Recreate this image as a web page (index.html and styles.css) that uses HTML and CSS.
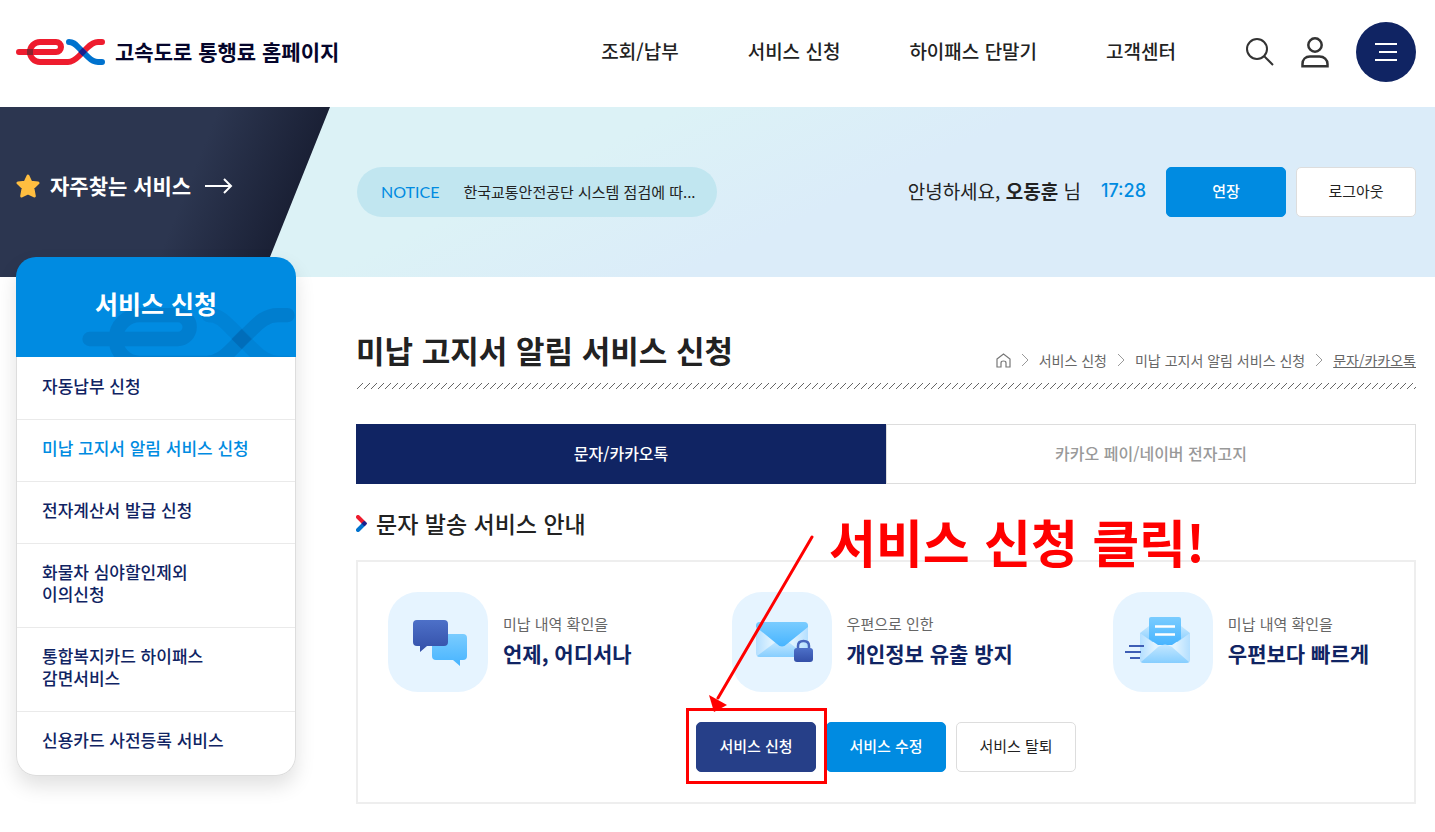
FILE: index.html
```html
<!DOCTYPE html>
<html lang="ko">
<head>
    <meta charset="UTF-8">
    <meta name="viewport" content="width=device-width, initial-scale=1">
    <title>고속도로 통행료 홈페이지</title>
    <link rel="stylesheet" href="styles.css">
</head>
<body>

<header class="header">
    <a href="#" class="logo">
        <svg width="89" height="26" viewBox="0 0 89 26" fill="none" stroke-width="6" stroke-linecap="round">
            <path stroke="#ee1c2e" d="M3 13H40A5 5 0 0 0 40 3H24A10 10 0 0 0 24 23H52C57 23 60 20 63 17L71 9C74 6 77 3 82 3H86"/>
            <path stroke="#0072ce" d="M53 3C57 3 59 5 62 8L72 18C75 21 78 23 82 23H86"/>
            <path fill="#8a2430" d="M11 10H17V16H11Z"/>
            <path fill="#1b1f8a" d="M66.700 8.800L70.900 13L66.700 17.200L62.500 13Z"/>
        </svg>
        <span>고속도로 통행료 홈페이지</span>
    </a>
    <nav class="gnb">
        <a href="#">조회/납부</a>
        <a href="#">서비스 신청</a>
        <a href="#">하이패스 단말기</a>
        <a href="#">고객센터</a>
    </nav>
    <div class="util">
        <button type="button" aria-label="검색">
            <svg width="28" height="28" viewBox="0 0 28 28" fill="none" stroke="#333" stroke-width="2">
                <circle cx="11" cy="11" r="10"/>
                <path d="M18 18L27 27"/>
            </svg>
        </button>
        <button type="button" aria-label="마이페이지">
            <svg width="28" height="31" viewBox="0 0 28 31" fill="none" stroke="#333" stroke-width="2.500">
                <circle cx="14" cy="8" r="6.700"/>
                <path d="M1.500 29.200V27C1.500 22.500 4.500 19.500 9 19.500H18.500C23 19.500 26.500 22.500 26.500 27V29.200Z"/>
            </svg>
        </button>
        <button type="button" class="menu" aria-label="전체메뉴">
            <svg width="22" height="18" viewBox="0 0 22 18" stroke="#fff" stroke-width="2">
                <path d="M0 1H22M4 9H22M0 17H22"/>
            </svg>
        </button>
    </div>
</header>

<section class="hero">
    <a href="#" class="quick">
        <svg width="24" height="24" viewBox="0 0 24 24" fill="#ffbe40" stroke="#ffbe40" stroke-width="3" stroke-linejoin="round">
            <path d="M12 2L14.800 8.200L22 9L16.800 13.800L18.300 22L12 18.800L5.700 22L7.200 13.800L2 9L9.200 8.200Z"/>
        </svg>
        <span>자주찾는 서비스</span>
        <svg width="28" height="16" viewBox="0 0 28 16" fill="none" stroke="#fff" stroke-width="2">
            <path d="M0 8H26M19 1L26 8L19 15"/>
        </svg>
    </a>
    <div class="hero-bar">
        <a href="#" class="notice"><span class="notice-label">NOTICE</span><span>한국교통안전공단 시스템 점검에 따...</span></a>
        <div class="session">
            <span>안녕하세요, <b>오동훈</b> 님</span>
            <span class="timer">17:28</span>
            <button type="button" class="btn btn-blue">연장</button>
            <button type="button" class="btn">로그아웃</button>
        </div>
    </div>
</section>

<div class="container">
    <aside class="side">
        <div class="side-title">
            <svg class="side-mark" width="213" height="62" viewBox="0 0 89 26" fill="none" stroke-width="6" stroke-linecap="round">
                <path stroke="#00569b" stroke-opacity=".25" d="M3 13H40A5 5 0 0 0 40 3H24A10 10 0 0 0 24 23H52C57 23 60 20 63 17L71 9C74 6 77 3 82 3H86"/>
                <path stroke="#00569b" stroke-opacity=".15" d="M53 3C57 3 59 5 62 8L72 18C75 21 78 23 82 23H86"/>
                <path fill="#00569b" fill-opacity=".3" d="M66.700 8.800L70.900 13L66.700 17.200L62.500 13Z"/>
            </svg>
            <h2>서비스 신청</h2>
        </div>
        <ul class="lnb">
            <li><a href="#">자동납부 신청</a></li>
            <li><a href="#" class="on">미납 고지서 알림 서비스 신청</a></li>
            <li><a href="#">전자계산서 발급 신청</a></li>
            <li><a href="#">화물차 심야할인제외<br>이의신청</a></li>
            <li><a href="#">통합복지카드 하이패스<br>감면서비스</a></li>
            <li><a href="#">신용카드 사전등록 서비스</a></li>
        </ul>
    </aside>

    <main class="content">
        <div class="title-row">
            <h1>미납 고지서 알림 서비스 신청</h1>
            <nav class="path">
                <a href="#" aria-label="홈">
                    <svg width="15" height="15" viewBox="0 0 15 15" fill="none" stroke="#777" stroke-width="1.200">
                        <path d="M1 6L7.500 1L14 6V14H10V10Q10 8 7.500 8Q5 8 5 10V14H1Z"/>
                    </svg>
                </a>
                <svg class="sep" width="8" height="14" viewBox="0 0 8 14" fill="none" stroke="#999"><path d="M1 1L7 7L1 13"/></svg>
                <a href="#">서비스 신청</a>
                <svg class="sep" width="8" height="14" viewBox="0 0 8 14" fill="none" stroke="#999"><path d="M1 1L7 7L1 13"/></svg>
                <a href="#">미납 고지서 알림 서비스 신청</a>
                <svg class="sep" width="8" height="14" viewBox="0 0 8 14" fill="none" stroke="#999"><path d="M1 1L7 7L1 13"/></svg>
                <a href="#" class="current">문자/카카오톡</a>
            </nav>
        </div>
        <svg class="hatch" width="100%" height="6">
            <defs>
                <pattern id="hatch" width="7" height="6" patternUnits="userSpaceOnUse">
                    <path d="M1 6L7 0" stroke="#666" fill="none"/>
                </pattern>
            </defs>
            <rect width="100%" height="6" fill="url(#hatch)"/>
        </svg>

        <div class="tabs">
            <button type="button" class="tab on">문자/카카오톡</button>
            <button type="button" class="tab">카카오 페이/네이버 전자고지</button>
        </div>

        <h2 class="sub-title">
            <svg width="11" height="17" viewBox="0 0 11 17" fill="none" stroke-width="4" stroke-linecap="round">
                <path stroke="#ee1c2e" d="M2 2L8.500 8.500"/>
                <path stroke="#0072ce" d="M2 15L8.500 8.500"/>
                <path fill="#1b1f8a" d="M8.300 5.700L11 8.500L8.300 11.300L5.500 8.500Z"/>
            </svg>
            문자 발송 서비스 안내
        </h2>

        <section class="card">
            <ul class="benefits">
                <li>
                    <span class="icon">
                        <svg width="100" height="100" viewBox="0 0 100 100">
                            <defs>
                                <linearGradient id="navy" x2="0" y2="1"><stop stop-color="#4d70c8"/><stop offset="1" stop-color="#334fa8"/></linearGradient>
                                <linearGradient id="sky" x2="0" y2="1"><stop stop-color="#7accff"/><stop offset="1" stop-color="#47b4ff"/></linearGradient>
                                <linearGradient id="pale" x2="0" y2="1"><stop stop-color="#c4e7ff"/><stop offset="1" stop-color="#86ceff"/></linearGradient>
                                <linearGradient id="flap"><stop stop-color="#b4dfff"/><stop offset=".3" stop-color="#e0f3ff"/><stop offset=".7" stop-color="#e0f3ff"/><stop offset="1" stop-color="#b4dfff"/></linearGradient>
                            </defs>
                            <path fill="url(#sky)" d="M48 42H75Q79 42 79 46V64Q79 68 75 68H72V74L65 68H48Q44 68 44 64V46Q44 42 48 42Z"/>
                            <path fill="url(#navy)" d="M29 28H56Q60 28 60 32V50Q60 54 56 54H39L32 60V54H29Q25 54 25 50V32Q25 28 29 28Z"/>
                        </svg>
                    </span>
                    <p><span>미납 내역 확인을</span><strong>언제, 어디서나</strong></p>
                </li>
                <li>
                    <span class="icon">
                        <svg width="100" height="100" viewBox="0 0 100 100">
                            <rect x="24" y="30" width="52" height="35" rx="4" fill="url(#flap)"/>
                            <path fill="url(#pale)" d="M25 64L45 49H55L75 64Q74 65 72 65H28Q26 65 25 64Z"/>
                            <path fill="url(#sky)" d="M28 30H72Q76 30 76 34V35L55 52Q50 57 45 52L24 35V34Q24 30 28 30Z"/>
                            <path fill="none" stroke="#4867be" stroke-width="2.500" d="M66 57V54Q66 49 71.500 49Q77 49 77 54V57"/>
                            <rect x="62" y="56" width="19" height="14" rx="3" fill="url(#navy)"/>
                        </svg>
                    </span>
                    <p><span>우편으로 인한</span><strong>개인정보 유출 방지</strong></p>
                </li>
                <li>
                    <span class="icon">
                        <svg width="100" height="100" viewBox="0 0 100 100">
                            <path fill="url(#pale)" d="M27 41L36 34H68L77 41V50H27Z"/>
                            <path fill="url(#flap)" d="M27 41L45 54H59L77 41V68Q77 71 74 71H30Q27 71 27 68Z"/>
                            <path fill="url(#sky)" d="M38 25H66Q68 25 68 27V47L59 53H45L36 47V27Q36 25 38 25Z"/>
                            <path stroke="#fff" stroke-width="2.500" d="M42 34.500H62M42 42.500H62"/>
                            <path fill="url(#pale)" d="M28 70L45 55Q52 50 59 55L76 70Q75 71 73 71H31Q29 71 28 70Z"/>
                            <path stroke="#3f5eb5" stroke-width="2" d="M16 54H31M12 60H28M17 66H27"/>
                        </svg>
                    </span>
                    <p><span>미납 내역 확인을</span><strong>우편보다 빠르게</strong></p>
                </li>
            </ul>
            <div class="actions">
                <div class="guide">
                    <button type="button" class="btn btn-navy">서비스 신청</button>
                    <span class="guide-box"></span>
                    <svg class="guide-arrow" width="130" height="180" viewBox="0 0 130 180">
                        <path d="M116 5L22 166" stroke="#f00" stroke-width="3" stroke-linecap="round"/>
                        <path d="M13 163L31 173L18 180Z" fill="#f00"/>
                    </svg>
                    <strong class="guide-text">서비스 신청 클릭!</strong>
                </div>
                <button type="button" class="btn btn-blue">서비스 수정</button>
                <button type="button" class="btn">서비스 탈퇴</button>
            </div>
        </section>
    </main>
</div>

</body>
</html>
```
FILE: styles.css
```css
* {
    box-sizing: border-box;
}
body {
    margin: 0;
    font-family: "Noto Sans CJK KR", sans-serif;
    font-size: 15px;
    line-height: 22px;
    color: #222;
    background: #fff;
}
h1, h2, p, ul {
    margin: 0;
    padding: 0;
}
ul {
    list-style: none;
}
a {
    color: inherit;
    text-decoration: none;
}
button {
    font-family: inherit;
    cursor: pointer;
}
svg {
    display: block;
    flex-shrink: 0;
}

/* header */
.header {
    display: flex;
    align-items: center;
    padding: 22px 19px 25px 16px;
}
.logo {
    display: flex;
    align-items: center;
    gap: 10px;
    font-size: 21px;
    font-weight: 700;
    color: #05052b;
}
.logo span, .gnb {
    padding-bottom: 3px;
}
.gnb {
    display: flex;
    gap: 69px;
    margin-left: auto;
    font-size: 19px;
    font-weight: 500;
}
.util {
    display: flex;
    align-items: center;
    gap: 27px;
    margin-left: 70px;
}
.util button {
    padding: 0;
    border: 0;
    background: none;
}
.util .menu {
    display: flex;
    align-items: center;
    justify-content: center;
    width: 60px;
    height: 60px;
    border-radius: 50%;
    background: #102463;
}

/* top band */
.hero {
    display: flex;
    min-height: 170px;
    background: linear-gradient(155deg, #dcf2f6 38%, #dbecf9 58%);
}
.quick {
    display: flex;
    align-items: center;
    gap: 10px;
    flex: 0 0 330px;
    padding: 0 0 12px 16px;
    font-size: 21px;
    font-weight: 700;
    color: #fff;
    background: linear-gradient(112deg, #2c3650 55%, #1a2035 83%);
    clip-path: polygon(0 0, 100% 0, 262px 100%, 0 100%);
}
.quick span {
    margin-right: 4px;
    padding-bottom: 2px;
}
.hero-bar {
    display: flex;
    flex: 1;
    align-items: center;
    justify-content: space-between;
    padding: 0 19px 0 27px;
}
.notice {
    display: flex;
    align-items: center;
    gap: 24px;
    width: 360px;
    height: 50px;
    padding: 0 24px;
    border-radius: 25px;
    background: #c1e6f0;
    white-space: nowrap;
}
.notice-label {
    font-family: Lato, sans-serif;
    font-size: 16px;
    color: #008be1;
}
.session {
    display: flex;
    align-items: center;
    gap: 10px;
    font-size: 19px;
}
.session > span {
    padding-bottom: 2px;
}
.timer {
    margin: 0 10px;
    font-family: Inter, sans-serif;
    font-size: 18px;
    font-weight: 500;
    color: #008be1;
}
.btn {
    width: 120px;
    height: 50px;
    padding: 0 0 4px;
    border: 1px solid #ddd;
    border-radius: 5px;
    font-size: 15px;
    color: #222;
    background: #fff;
}
.btn-blue {
    border-color: #008be1;
    font-weight: 500;
    color: #fff;
    background: #008be1;
}
.btn-navy {
    border-color: #263f88;
    font-weight: 500;
    color: #fff;
    background: #263f88;
}

.container {
    display: grid;
    grid-template-columns: 280px minmax(0, 1fr);
    gap: 60px;
    align-items: start;
    padding: 0 19px 28px 16px;
}

/* left menu */
.side {
    position: relative;
    margin-top: -20px;
    border-radius: 20px;
    box-shadow: 0 10px 20px rgba(0, 0, 0, 0.12);
}
.side-title {
    position: relative;
    height: 100px;
    padding-top: 28px;
    border-radius: 20px 20px 0 0;
    overflow: hidden;
    text-align: center;
    color: #fff;
    background: #008be1;
}
.side-title h2 {
    position: relative;
    font-size: 25px;
    line-height: 36px;
}
.side-mark {
    position: absolute;
    top: 51px;
    right: 1px;
}
.lnb {
    padding: 1px 0 2px;
    border: 1px solid #ddd;
    border-top: 0;
    border-radius: 0 0 20px 20px;
    background: #fff;
}
.lnb li + li {
    border-top: 1px solid #eaeaea;
}
.lnb a {
    display: block;
    padding: 17px 25px 22px;
    font-size: 17px;
    font-weight: 500;
    color: #102463;
}
.lnb .on {
    color: #008be1;
}

/* content */
.title-row {
    display: flex;
    align-items: flex-end;
    justify-content: space-between;
    padding-top: 48px;
}
.title-row h1 {
    padding-bottom: 2px;
    font-size: 31px;
    line-height: 50px;
}
.path {
    display: flex;
    align-items: center;
    gap: 10px;
    padding-bottom: 6px;
    font-size: 14px;
    color: #666;
}
.path .current {
    text-decoration: underline;
}
.hatch {
    margin: 6px 0 35px;
}
.tabs {
    display: flex;
}
.tab {
    flex: 1;
    height: 60px;
    padding-bottom: 4px;
    border: 1px solid #ddd;
    font-size: 16px;
    font-weight: 500;
    color: #999;
    background: #fff;
}
.tab.on {
    border-color: #102463;
    color: #fff;
    background: #102463;
}
.sub-title {
    display: flex;
    align-items: center;
    gap: 9px;
    padding: 22px 0 20px;
    font-size: 23px;
    font-weight: 500;
    line-height: 34px;
}
.card {
    padding: 30px;
    border: 2px solid #eee;
}
.benefits {
    display: flex;
    justify-content: space-between;
}
.benefits li {
    display: flex;
    align-items: center;
    gap: 15px;
    padding-right: 15px;
}
.icon {
    border-radius: 30px;
    background: #e6f4ff;
}
.benefits p {
    padding-bottom: 1px;
    color: #666;
}
.benefits p span, .benefits p strong {
    display: block;
}
.benefits strong {
    font-size: 21px;
    line-height: 36px;
    color: #102463;
}
.actions {
    display: flex;
    justify-content: center;
    gap: 10px;
    margin-top: 30px;
}

/* click guide drawn over the card */
.guide {
    position: relative;
}
.guide-box, .guide-arrow, .guide-text {
    position: absolute;
    pointer-events: none;
}
.guide-box {
    inset: -14px -11px -12px -10px;
    border: 3px solid #f00;
}
.guide-arrow {
    left: 0;
    bottom: 60px;
}
.guide-text {
    left: 133px;
    bottom: 195px;
    font-size: 51px;
    line-height: 72px;
    color: #f00;
    white-space: nowrap;
}
```
